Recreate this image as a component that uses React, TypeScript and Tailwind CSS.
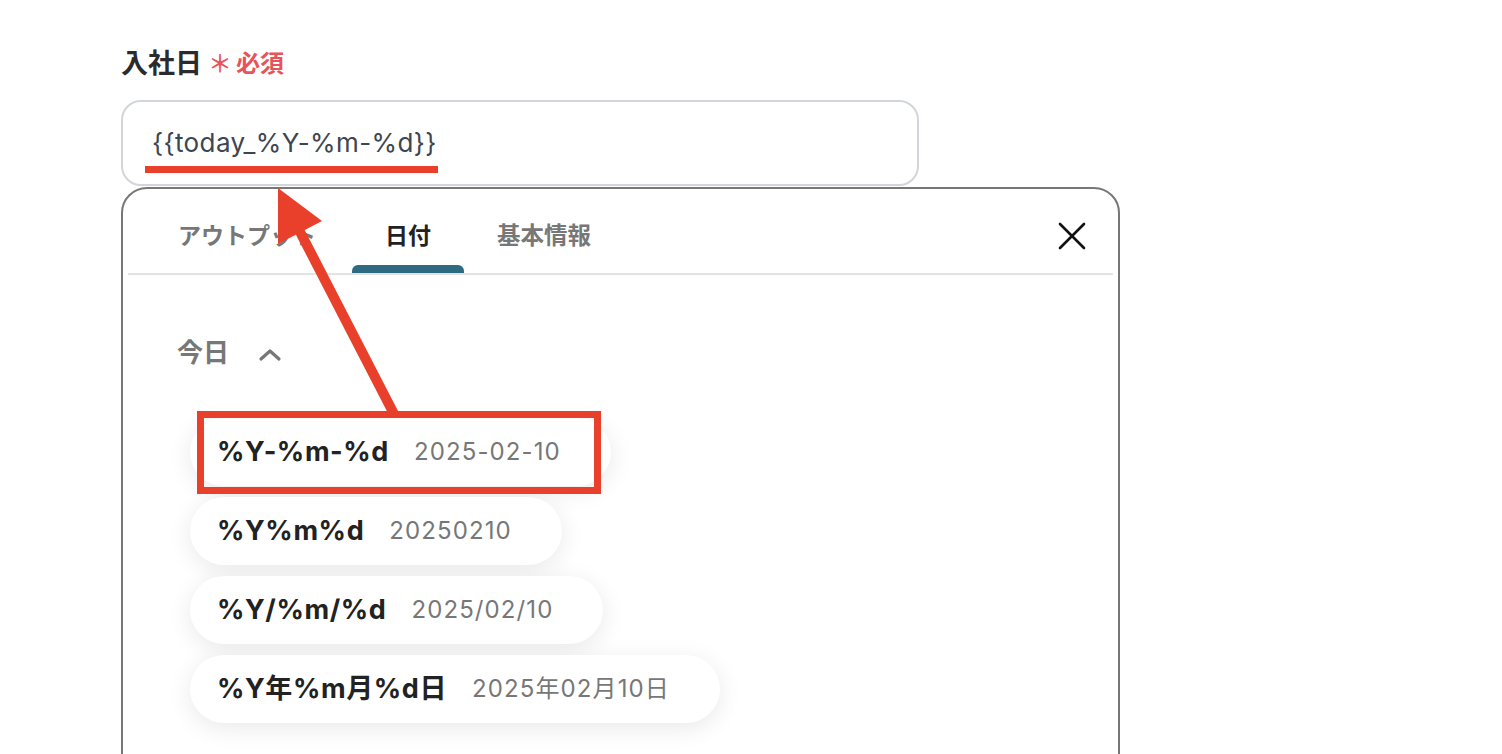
import React from 'react';

const formats = [
  { key: '%Y-%m-%d', value: '2025-02-10' },
  { key: '%Y%m%d', value: '20250210' },
  { key: '%Y/%m/%d', value: '2025/02/10' },
  { key: '%Y年%m月%d日', value: '2025年02月10日' },
];

const App: React.FC = () => {
  return (
    <div
      className="relative h-[754px] w-[1502px] overflow-hidden bg-white pl-[121px] pt-[48px]"
      style={{ fontFamily: '"Inter", "Noto Sans CJK JP", sans-serif' }}
    >
      {/* label */}
      <div className="flex items-center h-[32px]">
        <span className="text-[27px] font-bold text-[#2b2b2b]">入社日</span>
        <span className="ml-[6px] text-[24px] font-medium text-[#e8525a]">＊</span>
        <span className="ml-[4px] text-[24px] font-bold text-[#e8525a]">必須</span>
      </div>

      {/* input */}
      <div className="mt-[20px] flex h-[86px] w-[798px] items-center rounded-[20px] border-2 border-[#d2d6db] pl-[29px]">
        <span className="text-[26px] tracking-[0.4px] text-[#3d4550] pb-[2px]">{'{{today_%Y-%m-%d}}'}</span>
      </div>

      {/* panel */}
      <div className="mt-[1px] h-[620px] w-[999px] rounded-t-[26px] border-2 border-[#777] px-[5px]">
        <div className="flex h-[86px] items-end border-b-2 border-[#e3e3e3] pl-[17px] pr-[26px]">
          <div className="flex h-full w-[207px] items-center justify-start pl-[33px] pt-[10px] text-[23px] font-bold text-[#777]">
            アウトプット
          </div>
          <div className="flex h-full w-[112px] flex-col items-center">
            <div className="flex flex-1 items-center pt-[18px] text-[23px] font-bold text-[#222]">日付</div>
            <div className="h-[8px] w-full rounded-t-[6px] bg-[#2e6a80]" />
          </div>
          <div className="flex h-full items-center px-[33px] pt-[10px] text-[23.5px] font-bold text-[#777]">基本情報</div>
          <div className="ml-auto flex h-full items-center pt-[10px]">
            <svg width="30" height="30" viewBox="0 0 30 30">
              <path d="M3 3 L27 27 M27 3 L3 27" stroke="#111" strokeWidth="2.6" strokeLinecap="round" />
            </svg>
          </div>
        </div>

        <div className="pl-[49px] pt-[58px]">
          <div className="flex items-center">
            <span className="text-[26px] font-bold text-[#777]">今日</span>
            <svg width="24" height="16" viewBox="0 0 24 16" className="ml-[29px] mt-[4px]">
              <path d="M3 12 L12 4 L21 12" stroke="#777" strokeWidth="3.2" fill="none" strokeLinecap="round" strokeLinejoin="round" />
            </svg>
          </div>

          <div className="mt-[46px] ml-[13px] flex flex-col items-start gap-[11px]">
            {formats.map((f) => (
              <div
                key={f.key}
                className="flex h-[68px] items-center rounded-full bg-white pl-[27px] pr-[50px] shadow-[0_5px_24px_rgba(0,0,0,0.09)]"
              >
                <span className="text-[27px] font-bold tracking-[0.6px] text-[#222]">{f.key}</span>
                <span className="ml-[25px] text-[24px] tracking-[1.1px] text-[#777]">{f.value}</span>
              </div>
            ))}
          </div>
        </div>
      </div>

      {/* annotations */}
      <div className="absolute left-[145px] top-[166px] h-[7px] w-[293px] bg-[#e8402a]" />
      <div className="absolute left-[197px] top-[411px] h-[83px] w-[404px] border-[7px] border-[#e8402a]" />
      <svg className="absolute left-0 top-0" width="1502" height="754" viewBox="0 0 1502 754">
        <line x1="297" y1="226" x2="394" y2="414" stroke="#e8402a" strokeWidth="10" />
        <polygon points="278,188 322,221 278,244" fill="#e8402a" />
      </svg>
    </div>
  );
};

export default App;
